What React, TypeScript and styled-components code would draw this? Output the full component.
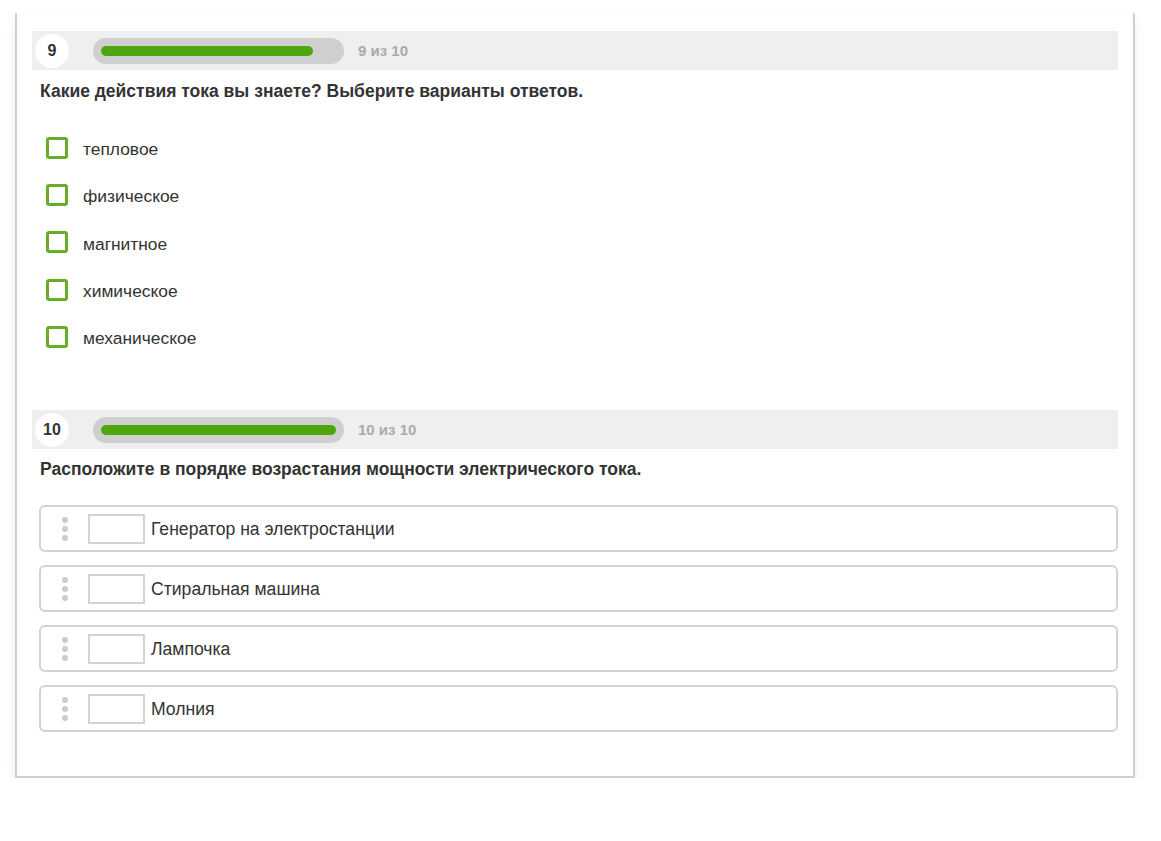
import React from "react";
import styled, { createGlobalStyle } from "styled-components";

const GlobalStyle = createGlobalStyle`
  body {
    margin: 0;
    background: #ffffff;
    font-family: "Liberation Sans", Arial, sans-serif;
    color: #333333;
  }
`;

const Card = styled.div`
  box-sizing: border-box;
  width: 1120px;
  margin: 13px 0 0 15px;
  padding: 18px 15px 44px 15px;
  background: #ffffff;
  border: 2px solid #cfcfcf;
  border-top: none;
  box-shadow: 0 6px 10px rgba(0, 0, 0, 0.08);
`;

const Section = styled.section<{ $gap?: number }>`
  margin-top: ${(p) => p.$gap ?? 0}px;
`;

const Header = styled.div`
  display: flex;
  align-items: center;
  height: 39px;
  padding-left: 3px;
  background: #efefef;
`;

const Number = styled.div`
  display: flex;
  align-items: center;
  justify-content: center;
  width: 34px;
  height: 34px;
  border-radius: 50%;
  background: #ffffff;
  font-weight: bold;
  font-size: 16px;
  color: #333333;
`;

const Track = styled.div`
  box-sizing: border-box;
  width: 251px;
  height: 26px;
  margin-left: 24px;
  padding: 8px;
  border-radius: 13px;
  background: #cfcfcf;
`;

const Fill = styled.div`
  height: 10px;
  border-radius: 5px;
  background: #4ea60e;
`;

const Counter = styled.span`
  margin-left: 14px;
  font-size: 15px;
  font-weight: bold;
  color: #aaaaaa;
`;

const Question = styled.h3<{ $top: number }>`
  margin: ${(p) => p.$top}px 0 0 8px;
  font-size: 17.5px;
  line-height: 18px;
  font-weight: bold;
  color: #333333;
`;

const Options = styled.div`
  margin-top: 24px;
  padding-left: 14px;
`;

const Option = styled.label`
  display: flex;
  align-items: center;
  height: 47.3px;
  font-size: 17.4px;
  color: #333333;
`;

const Box = styled.span`
  box-sizing: border-box;
  width: 22px;
  height: 22px;
  margin-right: 15px;
  border: 3px solid #68ac27;
  border-radius: 3px;
`;

const Label = styled.span`
  padding-top: 4px;
`;

const OrderList = styled.div`
  display: flex;
  flex-direction: column;
  gap: 13px;
  margin: 27px 0 0 7px;
`;

const OrderItem = styled.div`
  box-sizing: border-box;
  display: flex;
  align-items: center;
  height: 47px;
  border: 2px solid #d3d3d3;
  border-radius: 6px;
  font-size: 17.6px;
  color: #333333;
`;

const Handle = styled.div`
  display: flex;
  flex-direction: column;
  gap: 3px;
  margin-left: 21px;
  width: 6px;
`;

const Dot = styled.span`
  width: 6px;
  height: 6px;
  border-radius: 50%;
  background: #cccccc;
`;

const Slot = styled.div`
  box-sizing: border-box;
  width: 57px;
  height: 30px;
  margin: 0 6px 0 20px;
  border: 2px solid #d3d3d3;
`;

const Text = styled.span`
  padding-top: 2px;
`;

const ProgressHeader: React.FC<{ n: number; total: number }> = ({ n, total }) => (
  <Header>
    <Number>{n}</Number>
    <Track>
      <Fill style={{ width: `${(n / total) * 100}%` }} />
    </Track>
    <Counter>
      {n} из {total}
    </Counter>
  </Header>
);

const options = ["тепловое", "физическое", "магнитное", "химическое", "механическое"];
const items = ["Генератор на электростанции", "Стиральная машина", "Лампочка", "Молния"];

export default function App() {
  return (
    <>
      <GlobalStyle />
      <Card>
        <Section>
          <ProgressHeader n={9} total={10} />
          <Question $top={12}>Какие действия тока вы знаете? Выберите варианты ответов.</Question>
          <Options>
            {options.map((o) => (
              <Option key={o}>
                <Box />
                <Label>{o}</Label>
              </Option>
            ))}
          </Options>
        </Section>
        <Section $gap={50}>
          <ProgressHeader n={10} total={10} />
          <Question $top={11}>Расположите в порядке возрастания мощности электрического тока.</Question>
          <OrderList>
            {items.map((it) => (
              <OrderItem key={it}>
                <Handle>
                  <Dot />
                  <Dot />
                  <Dot />
                </Handle>
                <Slot />
                <Text>{it}</Text>
              </OrderItem>
            ))}
          </OrderList>
        </Section>
      </Card>
    </>
  );
}
